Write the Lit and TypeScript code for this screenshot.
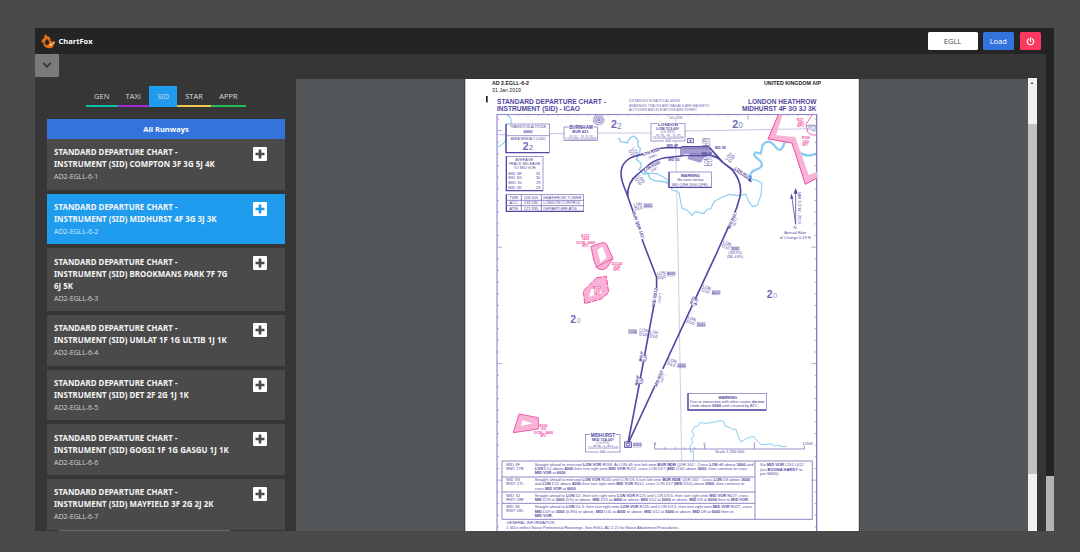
import { LitElement, html, svg, css } from "lit";
import { customElement, property } from "lit/decorators.js";

interface TextOptions {
  w?: number; // fitted width
  b?: boolean; // bold
  c?: string; // colour
  a?: string; // anchor
  r?: number; // rotation
}

const INK = "#5148a0";
const SOFT = "#7169b4";
const PINK = "#f0489f";

/** A chart label; x and y give the anchor on the baseline. */
const t = (x: number, y: number, size: number, content: unknown, o: TextOptions = {}) => svg`<text
  x=${x} y=${y} font-size=${size} font-weight=${o.b ? 700 : 400} fill=${o.c ?? INK}
  text-anchor=${o.a ?? "start"} transform=${o.r ? `rotate(${o.r} ${x} ${y})` : "rotate(0)"}
  textLength=${o.w ?? "none"} lengthAdjust="spacingAndGlyphs">${content}</text>`;

const m = (x: number, y: number, size: number, content: unknown, o: TextOptions = {}) =>
  t(x, y, size, content, { a: "middle", ...o });

const B = (s: string) => svg`<tspan font-weight="700">${s}</tspan>`;

/** A part of the sheet, drawn in thirds of a pixel from its own origin. */
const part = (x: number, y: number, content: unknown) =>
  svg`<g transform="translate(${x} ${y}) scale(0.33333)">${content}</g>`;

const shadowBox = (x: number, y: number, w: number, h: number) => svg`
  <rect x=${x} y=${y} width=${w} height=${h} fill="#fff" stroke=${SOFT} stroke-width="2"/>
  <path d="M${x} ${y}V${y + h}H${x + w}" fill="none" stroke=${INK} stroke-width="4"/>`;

const fix = (x: number, y: number, r: number, a = "LON", b = "D10") => svg`
  <g transform="translate(${x} ${y}) rotate(${r})">
    ${t(0, -1, 14, a, { w: 25 })}${t(0, 11, 14, b, { w: 25 })}
  </g>`;

const level = (x: number, y: number, s: string, w = 26) => svg`
  ${t(x, y, 11.5, s, { w, b: true })}
  <path d="M${x} ${y + 2}h${w}M${x} ${y - 10}h${w}" stroke=${SOFT} stroke-width="1.4"/>`;

const ticks = () => {
  const out = [];
  for (let i = 0; i < 36; i++) {
    const y = 119 + i * 11.65;
    const l = i % 10 === 1 ? 5 : 2;
    out.push(svg`<path d="M497 ${y}h${l}M816.5 ${y}h${-l}"/>`);
  }
  for (let x = 508; x < 814; x += 10) out.push(svg`<path d=${`M${x} 114.5v${x === 748 ? 5 : 1.6}`}/>`);
  return svg`<g stroke="#8d86c6" stroke-width=".7">${out}</g>`;
};

@customElement("departure-plate")
export class DeparturePlate extends LitElement {
  static styles = css`
    :host { display: block; flex: 1; min-width: 0; overflow: hidden; background: #525659; }
    svg { display: block; font-family: "Liberation Sans", Arial, sans-serif; }
  `;

  private heading() {
    return svg`
      ${t(492, 84.6, 6, "AD 2.EGLL-6-2", { w: 37, b: true, c: "#222" })}
      ${t(492, 91.8, 6, "31 Jan 2019", { w: 29, c: "#222" })}
      <rect x="486" y="96" width="1.7" height="6.4" fill="#222"/>
      ${t(764, 84.6, 6, "UNITED KINGDOM AIP", { w: 57, b: true, c: "#222" })}
      ${t(497, 104.2, 7.6, "STANDARD DEPARTURE CHART -", { w: 109, b: true })}
      ${t(497, 111.2, 7.6, "INSTRUMENT (SID) - ICAO", { w: 83, b: true })}
      ${t(629, 102, 3.9, "DISTANCES IN NAUTICAL MILES", { w: 51, c: SOFT })}
      ${t(629, 106.8, 3.9, "BEARINGS, TRACKS AND RADIALS ARE MAGNETIC", { w: 81, c: SOFT })}
      ${t(629, 111.2, 3.9, "ALTITUDES AND ELEVATIONS ARE IN FEET", { w: 68, c: SOFT })}
      ${t(748, 104.2, 7.6, "LONDON HEATHROW", { w: 68.5, b: true })}
      ${t(742, 111.2, 7.6, "MIDHURST 4F 3G 3J 3K", { w: 74.5, b: true })}`;
  }

  private water() {
    return part(650, 75, svg`<g fill="none" stroke="#8bcdf2" stroke-linejoin="round">
      <path stroke-width="4" d="M-97 190l6 2 2 8 16 2 6 2 0-4 8-12 10-5 8 6 6 10-2 12 8 10-2 14-10 18 14 12 0 12-6 6 14 14 14 0 4 12 14 8 36 4 18 20"/>
      <path stroke-width="3.4" d="M-18 290L0 295L22 296L40 306L60 320L66 345L87 352L92 380L96 400L112 406L126 421L136 410L162 416L172 402L182 402L192 380L212 368L240 358L262 362L288 358L296 380L308 394L322 391L333 360L336 325L318 315L304 314"/>
      <path stroke-width="7" d="M304 314Q296 290 316 285Q348 274 328 255Q304 238 318 232L332 236L338 210Q356 188 376 215Q392 236 400 212Q410 184 430 192Q438 215 438 225Q462 246 486 240L500 236"/>
      <path stroke-width="3.4" d="M-428 119Q-412 132 -418 146Q-430 165 -434 198Q-446 214 -458 216"/>
    </g>`);
  }

  private topLeft() {
    return part(460, 75, svg`
      <path d="M110 179H138M268 176H312M413 174H574" stroke="#b7b2dd" stroke-width="2.4"/>
      ${shadowBox(138, 147, 130, 86)}
      <path d="M138 182H268" stroke=${SOFT} stroke-width="2"/>
      ${t(150, 160, 11, "TRANSITION ALTITUDE", { w: 109 })}
      ${m(204, 174, 11.5, "6000", { w: 27, b: true })}
      ${t(152, 195, 11, "AREA MNM ALT (x100)", { w: 104 })}
      ${t(188, 224, 31, "2", { b: true, c: SOFT })}${t(206, 224, 24, "2", { c: SOFT })}
      <rect x="312" y="156" width="101" height="40" fill="#fff" stroke=${SOFT} stroke-width="2"/>
      <path d="M326 156H401" stroke="#fff" stroke-width="5"/>
      ${t(328, 162, 14, "BURNHAM", { w: 70, b: true })}
      ${t(337, 175, 12, "BUR 421", { w: 48, b: true })}
      <path d="M329 183h9m4 0h9m12 0h9m4 0h9m4 0h9" stroke=${SOFT} stroke-width="2"/>
      ${t(316, 194, 9, "513108N 0004038W", { w: 93, c: SOFT })}
      <circle cx="416" cy="134" r="15" fill="#efedf8" stroke="#8d86c6" stroke-width="5" stroke-dasharray="2 1.6"/>
      <circle cx="416" cy="134" r="9" fill="none" stroke=${SOFT} stroke-width="2.4"/>
      <circle cx="416" cy="134" r="3.4" fill="none" stroke=${INK} stroke-width="2.4"/>
      ${t(453, 160, 32, "2", { b: true, c: SOFT })}${t(471, 161, 25, "2", { c: "#8d86c6" })}
      ${shadowBox(139, 244, 110, 103)}
      ${m(193, 257, 12, "AVERAGE", { w: 54 })}
      ${m(193, 269, 12, "TRACK MILEAGE", { w: 97 })}
      ${m(194, 281, 12, "TO MID VOR", { w: 66 })}
      ${[["4F", "31"], ["3G", "30"], ["3J", "29"], ["3K", "29"]].map(([a, b], i) => svg`
        ${t(145, 299 + i * 14, 12, `MID ${a}`, { w: 40 })}${t(228, 299 + i * 14, 12, b, { w: 13 })}`)}
      ${shadowBox(139, 359, 232, 50)}
      <path d="M139 376H371M139 392H371M184 359V409M244 359V409" stroke=${SOFT} stroke-width="2.4"/>
      ${[["TWR", "118.505", "HEATHROW TOWER", 115], ["ACC", "133.180", "LONDON CONTROL", 112], ["ATIS", "121.935", "DEPARTURE ATIS", 101]].map(
        ([a, b, c, w], i) => svg`
        ${t(148, 372 + i * 16.5, 12, a, { w: 26 })}${t(191, 372 + i * 16.5, 12, b, { w: 44 })}
        ${t(250, 372 + i * 16.5, 12, c, { w: w as number })}`)}
    `);
  }

  private topRight() {
    return part(650, 75, svg`
      <path d="M105 168L500 161" stroke="#b7b2dd" stroke-width="2.4"/>
      <path d="M77 130V146M77 199L84 510L95 1160" stroke="#c9c5e6" stroke-width="2.6" fill="none"/>
      ${m(77, 132, 9, "000 30W", { w: 40, c: SOFT })}
      <path d="M385 119L354 192L426 204L466 328L501 309V290L476 300L436 186L378 181L398 119Z" fill="url(#hatch)"/>
      <path d="M385 119L354 192L426 204L466 328L501 309" fill="none" stroke=${PINK} stroke-width="3"/>
      <path d="M487 119L468 148L474 172Q480 182 501 180" fill="none" stroke=${PINK} stroke-width="2.6"/>
      ${m(450, 138, 11, "R157", { w: 20, b: true, c: PINK })}${m(452, 148, 11, "2400", { w: 18, b: true, c: PINK })}
      ${m(452, 157, 11, "SFC", { w: 22, b: true, c: PINK })}
      ${m(468, 193, 11, "R160", { w: 24, b: true, c: PINK })}${m(467, 203, 11, "1400", { w: 20, b: true, c: PINK })}
      ${m(466, 212, 11, "SFC", { w: 18, b: true, c: PINK })}
      <rect x="470" y="150" width="29" height="12" rx="5" fill="#fff" stroke=${SOFT} stroke-width="1.5"/>
      ${m(485, 160, 9, "VRPS", { w: 24 })}
      <rect x="3" y="146" width="102" height="52" fill="#fff" stroke=${SOFT} stroke-width="2"/>
      <path d="M22 146H86M42 198H66" stroke="#fff" stroke-width="5"/>
      ${t(24, 152, 13, "LONDON", { w: 60, b: true })}
      ${t(19, 164, 12, "LON 113.60°", { w: 69, b: true })}
      ${m(53, 174, 9, "(Ch 83X)", { w: 42, c: SOFT })}
      <path d="M18 180h10m4 0h10m8 0h10m8 0h8m4 0h12" stroke=${SOFT} stroke-width="2"/>
      ${t(8, 191, 9, "512914N 0002800W", { w: 92, c: SOFT })}${m(54, 202, 9, "110", { w: 17 })}
      <rect x="113" y="191" width="17" height="12" fill="#fff" stroke=${INK} stroke-width="2.6"/><circle cx="121.5" cy="197" r="3" fill=${INK}/>
      <path d="M90 217L122 212L176 217L188 238L164 246L152 263L112 252L118 238H104L90 243" fill="#a39dd1"/>
      <path d="M94 215H178M94 242H184" stroke=${INK} stroke-width="4"/>
      <path d="M100 221H180M120 236H182" stroke=${SOFT} stroke-width="2"/>
      ${fix(170, 213, -90)}${fix(176, 272, -90)}
      <g fill="none" stroke=${INK} stroke-width="5" stroke-linejoin="round">
        <path d="M178 217L218 262L246 284Q286 330 264 385Q260 402 240 445L200 534L-65 1104"/>
        <path d="M184 242Q205 246 218 262"/>
      </g>
      <path d="M222 264L304 319" stroke=${INK} stroke-width="2.4"/><path d="M306 321l-12-3 6-8z" fill=${INK}/>
      ${t(50, 215, 10.5, "MID 4F", { w: 34, b: true })}${t(55, 258, 10.5, "MID 3G", { w: 34, b: true })}
      ${t(194, 223, 10.5, "MID 3K", { w: 34, b: true })}${t(155, 239, 10, "MID 3J", { w: 30, b: true })}
      ${fix(232, 257, -52)}
      ${t(253, 282, 13, "LON R125", { w: 58, b: true, r: 34 })}
      ${shadowBox(57, 291, 127, 46)}
      ${m(121, 307, 12, "WARNING", { w: 57, b: true })}
      ${m(121, 319, 12.5, "No turns below", { w: 79 })}
      ${m(119, 332, 12.5, "580 QNH (500 QFE)", { w: 108 })}
      ${t(247, 158, 32, "2", { b: true, c: SOFT })}${t(265, 158, 25, "0", { c: "#8d86c6" })}
      <path d="M437 448V345M437 448L425 362" stroke=${INK} stroke-width="2.4"/>
      <path d="M437 338l-6 18h12zM424 355l-3 16h9z" fill=${INK}/>
      ${t(444, 350, 10, "VAR 0.3°W - 2019", { w: 96, r: 90 })}
      ${m(435, 462, 12, "N", {})}
      ${m(436, 476, 12, "Annual Rate", { w: 66 })}${m(436, 491, 12, "of Change 0.15°E", { w: 94 })}
      <path d="M236 454L256 412" stroke="#fff" stroke-width="9"/>
      ${t(240, 462, 13, "MID R027", { w: 55, b: true, r: -66 })}${t(254, 454, 10, "(027°)", { w: 26, r: -66 })}
      ${fix(218, 506, 20)}${level(242, 526, "3000")}
      ${m(255, 538, 9, "(500 5%)", { w: 40 })}${m(255, 549, 9, "(3BL 4.8%)", { w: 48 })}
    `);
  }

  private westRoutes() {
    return svg`
      <g fill="none" stroke=${INK} stroke-width="1.6" stroke-linejoin="round">
        <path d="M682 147.7H665Q654 149 650 152L638 155.5Q621 159 621 174Q621 180 626.5 193L634 214L643 242L656.5 277Q657 287 656 294L648 337L638 391L628 443"/>
        <path d="M682 156L665 157.7Q657 159 650 164L638 174Q627 182 627.7 197"/>
      </g>
      ${part(460, 75, svg`
        <path d="M550 238L600 224" stroke="#fff" stroke-width="9"/>
        ${t(548, 243, 13, "LON R258", { w: 54, b: true, r: -17 })}${t(566, 251, 10, "(258°)", { w: 27, r: -17 })}
        <path d="M556 284L602 260" stroke="#fff" stroke-width="9"/>
        ${t(554, 290, 13, "LON R240", { w: 54, b: true, r: -28 })}${t(574, 292, 10, "(240°)", { w: 24, r: -28 })}
        ${fix(514, 222, 55)}${fix(532, 306, 50)}
        ${fix(522, 396, -10)}${level(551, 396, "6000")}
      `)}
      ${part(460, 215, svg`
        <path d="M519 -10L547 72" stroke="#fff" stroke-width="10"/>
        ${t(516, -8, 13, "BUR QDR 161°", { w: 86, b: true, r: 70 })}
        ${fix(592, 182, -8)}${level(620, 181, "4000")}
        <path d="M589 220L579 272" stroke="#fff" stroke-width="9"/>
        ${t(584, 276, 13, "MID R012", { w: 56, b: true, r: -81 })}${t(600, 264, 10, "(192°)", { w: 30, r: -81 })}
        ${level(505, 354, "5000")}${fix(538, 350, 7)}${fix(569, 356, 7)}
        <circle cx="551" cy="430" r="9" fill="#fff" stroke=${SOFT} stroke-width="2"/>
        ${t(544, 440, 11, "MID 4F", { w: 32, b: true, r: -80 })}${t(556, 440, 11, "D12", { w: 20, r: -80 })}
        <circle cx="540" cy="498" r="9" fill="#fff" stroke=${SOFT} stroke-width="2"/>
        ${t(532, 512, 11, "MID 4F", { w: 32, b: true, r: -80 })}${t(544, 508, 11, "D10", { w: 20, r: -80 })}
        ${t(331, 323, 31, "2", { b: true, c: SOFT })}${t(350, 323, 22, "0", { c: "#9b95cc" })}
      `)}`;
  }

  private dangerAreas() {
    return svg`${part(460, 215, svg`
      <path fill-rule="evenodd" d="M393 94L431 82L440 88L459 130L441 158Q424 170 410 158L401 135ZM412 106L427 94L440 127L422 143Z" fill="url(#hatch)"/>
      <path d="M393 94L431 82L440 88L459 130L441 158Q424 170 410 158L401 135ZM407 157L459 130" fill="none" stroke=${PINK} stroke-width="2.6"/>
      <path fill-rule="evenodd" d="M410 188L439 184L446 232L426 251L374 266L370 228ZM394 222L418 214L426 234L387 245Z" fill="url(#hatch)"/>
      <path d="M410 188L439 184L446 232L426 251L374 266L370 228Z" fill="none" stroke=${PINK} stroke-width="3" stroke-dasharray="16 4"/>
      <g>${[["D133", 376, 67, 25], ["1200", 376, 76, 22], ["OCNL 2400", 377, 87, 58], ["SFC", 376, 95, 20],
        ["D133A", 471, 149, 30], ["1200", 470, 158, 22], ["SFC", 470, 167, 20],
        ["D132", 411, 221, 24], ["1300", 411, 230, 20], ["SFC", 411, 239, 18]].map(
        ([s, x, y, w]) => m(x as number, y as number, 11, s, { w: w as number, b: true, c: PINK }))}</g>`)}
      ${part(460, 380, svg`
      <path fill-rule="evenodd" d="M177 102L235 113V147L160 158ZM187 121L218 130L183 138Z" fill="url(#hatch)"/>
      <path d="M177 102L235 113V147L160 158Z" fill="none" stroke=${PINK} stroke-width="2.6"/>
      ${[["R106", 250, 141, 24], ["1900", 250, 151, 18], ["OCNL 2400", 250, 162, 58], ["SFC", 250, 171, 20]].map(
        ([s, x, y, w]) => m(x as number, y as number, 11, s, { w: w as number, b: true, c: PINK }))}`)}`;
  }

  private east() {
    return part(650, 245, svg`
      ${fix(157, 128, 20)}${level(185, 147, "4000")}
      ${fix(112, 222, 20)}${level(140, 242, "5000")}
      ${fix(54, 348, 20)}${level(82, 366, "6000")}
      <ellipse cx="131" cy="171" rx="8" ry="12" fill="#fff" stroke="#8d86c6" stroke-width="2"/>
      ${fix(128, 180, -65, "MID", "17")}
      <path d="M14 424L39 372" stroke="#fff" stroke-width="9"/>
      ${t(20, 426, 13, "MID R027", { w: 52, b: true, r: -66 })}${t(36, 414, 10, "(207°)", { w: 26, r: -66 })}
      ${t(350, 160, 31, "2", { b: true, c: SOFT })}${t(369, 160, 23, "0", { c: "#9b95cc" })}
      ${shadowBox(114, 445, 235, 50)}
      ${m(233, 461, 12, "WARNING", { w: 57, b: true })}
      ${t(120, 473, 12.5, svg`Due to interaction with other routes ${B("do not")}`, { w: 222 })}
      ${t(120, 485, 12.5, svg`climb above ${B("6000")} until cleared by ATC.`, { w: 206 })}
    `);
  }

  private foot() {
    return part(460, 380, svg`
      <path d="M700 245V212L692 218L690 200L698 186L694 176L702 166L696 152L704 140L714 138L720 128L742 130L784 122L792 126L795 138L812 144L816 148L828 148L832 162L842 186L866 172L882 170L894 186L906 194L934 192L944 198L960 196L966 200L980 200" fill="none" stroke="#8bcdf2" stroke-width="3"/>
      <path d="M584 188V207H1033V197M734 194V207M883 194V207M615 202V207M645 202V207M674 202V207M704 202V207" fill="none" stroke="#7f78bd" stroke-width="2.4"/>
      ${m(585, 195, 12, "5", { c: SOFT })}${m(733, 195, 12, "0", { c: SOFT })}${m(883, 195, 12, "5", { c: SOFT })}
      ${t(1027, 195, 11, "10NM", { w: 31, c: SOFT })}${m(809, 220, 11.5, "Scale 1:350 000", { w: 87 })}
      <rect x="377" y="164" width="103" height="52" fill="#fff" stroke=${SOFT} stroke-width="2"/>
      <path d="M390 164H467M416 216H440" stroke="#fff" stroke-width="5"/>
      ${t(392, 170, 13.5, "MIDHURST", { w: 73, b: true })}${t(396, 182, 12, "MID 114.00°", { w: 66, b: true })}
      ${m(429, 191, 9, "(Ch 87X)", { w: 40, c: SOFT })}
      <path d="M400 197h9m4 0h9m8 0h4m8 0h9m4 0h3" stroke=${SOFT} stroke-width="2"/>
      ${t(384, 208, 9, "510314N 0003730W", { w: 90, c: SOFT })}${m(428, 220, 9, "200", { w: 16 })}
      <rect x="494" y="186" width="20" height="16" fill="#fff" stroke=${INK} stroke-width="3"/>
      <circle cx="504" cy="194" r="5" fill="#fff" stroke=${INK} stroke-width="3"/>
      ${level(519, 199, "6000")}
    `);
  }

  private routeings() {
    const s = 12;
    return svg`
      <rect x="502" y="461" width="310" height="58" fill="#fff"/>
      ${part(495, 455, svg`
      <path d="M21 18H952V193H21ZM780 18V193M21 66H780M21 111H780M21 145H780" fill="none" stroke=${SOFT} stroke-width="2.4"/>
      ${[["MID 4F", 33], ["RMY 27R", 44], ["MID 3G", 79], ["RWY 27L", 91], ["MID 3J", 126], ["RWY 09R", 138], ["MID 3K", 159], ["RWY 09L", 172]].map(
        ([a, y]) => t(34, y as number, s, a, { w: (a as string).startsWith("MID") ? 41 : 52 }))}
      ${t(119, 33, s, svg`Straight ahead to intercept ${B("LON VOR")} R258. At LON d5 turn left onto ${B("BUR NDB")} QDR 161°. Cross ${B("LON")} d8 above ${B("3000")} and`, { w: 656 })}
      ${t(119, 45, s, svg`${B("LON")} D12 above ${B("4000")} then turn right onto ${B("MID VOR")} R012, cross LON D17 ${B("(MID")} D10) above ${B("5000")}, then continue to cross`, { w: 638 })}
      ${t(119, 58, s, svg`${B("MID VOR")} at ${B("6000")}.`, { w: 96 })}
      ${t(119, 79, s, svg`Straight ahead to intercept ${B("LON VOR")} R240 until LON D5.5 turn left onto ${B("BUR NDB")} QDR 161°. Cross ${B("LON")} D8 above ${B("3000")}`, { w: 646 })}
      ${t(119, 91, s, svg`and ${B("LON")} D12 above ${B("4000")} then turn right onto ${B("MID VOR")} R012, cross LON D17 ${B("(MID")} D10) above ${B("5000")}, then continue to`, { w: 629 })}
      ${t(119, 104, s, svg`cross ${B("MID VOR")} at ${B("6000")}.`, { w: 126 })}
      ${t(119, 126, s, svg`Straight ahead to ${B("LON")} D2, then turn right onto ${B("LON VOR")} R125 until LON D3.5, then turn right onto ${B("MID VOR")} R027, cross`, { w: 641 })}
      ${t(119, 138, s, svg`${B("MID")} D19 at ${B("3000")} (5%) or above, ${B("MID")} D15 at ${B("4000")} or above, ${B("MID")} D12 at ${B("5000")} or above, ${B("MID")} D8 at ${B("6000")} then to ${B("MID VOR")}.`, { w: 643 })}
      ${t(119, 160, s, svg`Straight ahead to ${B("LON")} D1.5, then turn right onto ${B("LON VOR")} R125 until LON D3.5, then turn right onto ${B("MID VOR")} R027, cross`, { w: 652 })}
      ${t(119, 173, s, svg`${B("MID")} D19 at ${B("3000")} (4.8%) or above, ${B("MID")} D15 at ${B("4000")} or above, ${B("MID")} D12 at ${B("5000")} or above, ${B("MID")} D8 at ${B("6000")} then to`, { w: 596 })}
      ${t(119, 187, s, B("MID VOR."), { w: 54 })}
      ${t(795, 33, s, svg`Via ${B("MID VOR")} L151 L612`, { w: 131 })}
      ${t(795, 47, s, svg`(via ${B("BOGNA HARDY")} to`, { w: 127 })}
      ${t(795, 61, s, "join M605).", { w: 58 })}
      ${t(34, 207, s, "GENERAL INFORMATION", { w: 144 })}
      ${t(34, 221, s, "1   SIDs reflect Noise Preferential Routeings. See EGLL AD 2.21 for Noise Abatement Procedures.", { w: 519 })}
    `)}`;
  }

  render() {
    return html`<svg width="732" height="452" viewBox="296 79 732 452">
      <defs>
        <pattern id="hatch" width="4.4" height="4.4" patternUnits="userSpaceOnUse" patternTransform="rotate(45)">
          <rect width="4.4" height="4.4" fill="#fbc3e0"/><rect width="1.4" height="4.4" fill="#f48fc3"/>
        </pattern>
      </defs>
      <rect x="464" y="78" width="396" height="454" fill="#414447"/>
      <rect x="465.3" y="78" width="393.5" height="454" fill="#fff"/>
      ${this.heading()} ${this.water()}
      <path d="M497 531V114.5" fill="none" stroke="#aaa5d8" stroke-width="1.5"/>
      <path d="M496.5 114.5H816.7" fill="none" stroke="#8d86c6" stroke-width="1.1"/>
      <path d="M816.7 114V531" fill="none" stroke="#7870c0" stroke-width="1.2"/>
      ${ticks()} ${this.topRight()} ${this.westRoutes()} ${this.topLeft()} ${this.dangerAreas()}
      ${this.east()} ${this.foot()} ${this.routeings()}
    </svg>`;
  }
}

@customElement("chart-card")
export class ChartCard extends LitElement {
  @property({ attribute: false }) lines: string[] = [];
  @property() code = "";
  @property({ type: Boolean, reflect: true }) selected = false;

  static styles = css`
    :host { display: flex; flex: none; justify-content: space-between; box-sizing: border-box; padding: 7.4px 18px 7.4px 7px;
      background: #4a4a4a; color: #f5f5f5; line-height: 12px; white-space: nowrap; }
    :host([selected]) { background: #209cee; }
    .title { font-family: "Noto Sans", "Open Sans", sans-serif; font-weight: 700; font-size: 7.9px; letter-spacing: 0.03px; }
    .code { font-size: 7.2px; color: #d0d0d0; letter-spacing: -0.13px; }
    :host([selected]) .code { color: #cfe9fb; }
    .add { flex: none; width: 14px; height: 14px; margin-top: 0.6px; }
  `;

  render() {
    return html`
      <div>
        ${this.lines.map((l) => html`<div class="title">${l}</div>`)}
        <div class="code">${this.code}</div>
      </div>
      <svg class="add" viewBox="0 0 14 14">
        <rect width="14" height="14" rx="1" fill="#fff"/>
        <path d="M7 2.5v9M2.5 7h9" stroke=${this.selected ? "#209cee" : "#4a4a4a"} stroke-width="2.6"/>
      </svg>`;
  }
}

const CHARTS = [
  ["INSTRUMENT (SID) COMPTON 3F 3G 5J 4K"],
  ["INSTRUMENT (SID) MIDHURST 4F 3G 3J 3K"],
  ["INSTRUMENT (SID) BROOKMANS PARK 7F 7G", "6J 5K"],
  ["INSTRUMENT (SID) UMLAT 1F 1G ULTIB 1J 1K"],
  ["INSTRUMENT (SID) DET 2F 2G 1J 1K"],
  ["INSTRUMENT (SID) GOGSI 1F 1G GASGU 1J 1K"],
  ["INSTRUMENT (SID) MAYFIELD 3F 2G 2J 2K"],
];

@customElement("app-root")
export class AppRoot extends LitElement {
  static styles = css`
    :host { display: block; box-sizing: border-box; width: 1080px; height: 552px; padding: 28px 26.5px 21px 35px;
      overflow: hidden; background: #4a4a4a; font-family: "Open Sans", "Noto Sans", sans-serif; font-size: 7.5px; }
    .window { display: flex; flex-direction: column; height: 503px; overflow: hidden; background: #363636; }
    .navbar { display: flex; align-items: center; flex: none; height: 26px; box-sizing: border-box; padding: 0 13px 0 5px; background: #242424; }
    .logo { width: 16px; height: 16px; }
    .brand { flex: 1; margin-left: 2.5px; color: #fff; font-weight: 700; font-size: 7.5px; }
    .airport, .load, .power { display: flex; align-items: center; justify-content: center; height: 18px; border-radius: 1.5px; color: #fff; }
    .airport { width: 50px; margin-right: 5.5px; background: #fff; color: #4a4a4a; }
    .load { width: 30.5px; margin-right: 6px; background: #3273dc; }
    .power { width: 21px; background: #ff3860; }
    .body { display: flex; flex: 1; min-height: 0; }
    .side { display: flex; flex-direction: column; width: 261px; overflow: hidden; }
    .toggle { display: flex; align-items: center; justify-content: center; flex: none; width: 23.5px; height: 22.5px; background: #7a7a7a; border-radius: 0 0 1.5px 0; }
    .tabs { display: flex; flex: none; height: 21px; margin: 9.5px 0 12px 51px; }
    .tab { display: flex; align-items: center; justify-content: center; box-sizing: border-box; border-bottom: 2px solid; }
    .tab span { color: #dbdbdb; }
    .gen { width: 31.5px; border-color: #08bfa3; }
    .taxi { width: 31.5px; border-color: #a12bd6; }
    .sid { width: 28px; border-color: #209cee; background: #209cee; }
    .star { width: 34px; border-color: #f1c550; }
    .appr { width: 35px; border-color: #22bd55; }
    .list { display: flex; flex-direction: column; flex: 1; gap: 3.9px; min-height: 0; overflow: hidden; margin: 0 11px 0 12px; }
    .runways { flex: none; height: 20px; margin-bottom: -3.9px; line-height: 20.5px; background: #3273dc; color: #fff; text-align: center; font-weight: 700; }
    .hbar { flex: none; height: 1px; margin: 0 66px 0 23.5px; background: #686868; }
    .viewer { display: flex; width: 740.5px; margin-top: 25px; }
    .scroll { display: flex; flex-direction: column; width: 8.5px; margin-top: -1px; background: #f1f1f1; }
    .arrow { display: block; width: 8px; height: 46px; }
    .thumb { height: 350px; background: #c1c1c1; }
    .outer { width: 7.5px; margin-left: auto; background: #242424; display: flex; flex-direction: column; justify-content: flex-end; }
    .outer-thumb { height: 55px; background: #b3b3b3; }
  `;

  render() {
    return html`<div class="window">
      <div class="navbar">
        <svg class="logo" viewBox="30 38 48 48">
          <path d="M48 41Q40 49 43 54Q35 56 34 66Q42 65 45 72Q43 62 49 57Q57 56 56 66L62 62Q62 48 51 48Z" fill="#e8700d"/>
          <path d="M39 69Q42 83 57 84Q72 83 71 73L76 61L70 64L61 62L57 71Q49 77 46 70Z" fill="#e8700d"/>
          <path d="M58 62L62 67L70 67L75 62L73 71L66 75L59 70Z" fill="#f48a1d"/>
          <path d="M60 70l6 4-3 2-5-3z" fill="#fff"/><circle cx="69" cy="69" r="1.5" fill="#fff"/>
        </svg>
        <div class="brand">ChartFox</div>
        <div class="airport">EGLL</div>
        <div class="load">Load</div>
        <div class="power">
          <svg width="9" height="9" viewBox="0 0 9 9" fill="none" stroke="#fff" stroke-width="1.2" stroke-linecap="round">
            <path d="M2.7 1.9A3.2 3.2 0 1 0 6.3 1.9M4.5 .8V4.3"/>
          </svg>
        </div>
      </div>
      <div class="body">
        <div class="side">
          <div class="toggle">
            <svg width="10" height="8" viewBox="0 0 10 8" fill="none" stroke="#3a3a3a" stroke-width="1.9"><path d="M1.1 1.9L5 5.7L8.9 1.9"/></svg>
          </div>
          <div class="tabs">
            ${["GEN", "TAXI", "SID", "STAR", "APPR"].map((n) => html`<div class="tab ${n.toLowerCase()}"><span>${n}</span></div>`)}
          </div>
          <div class="list">
            <div class="runways">All Runways</div>
            ${CHARTS.map((c, i) => html`<chart-card .lines=${["STANDARD DEPARTURE CHART -", ...c]}
              code=${`AD2-EGLL-6-${i + 1}`} ?selected=${i === 1}></chart-card>`)}
          </div>
          <div class="hbar"></div>
        </div>
        <div class="viewer">
          <departure-plate></departure-plate>
          <div class="scroll">
            <svg class="arrow" viewBox="0 0 8 46"><path d="M2.3 6L4 4L5.7 6Z" fill="#505050"/></svg>
            <div class="thumb"></div>
          </div>
        </div>
        <div class="outer"><div class="outer-thumb"></div></div>
      </div>
    </div>`;
  }
}
